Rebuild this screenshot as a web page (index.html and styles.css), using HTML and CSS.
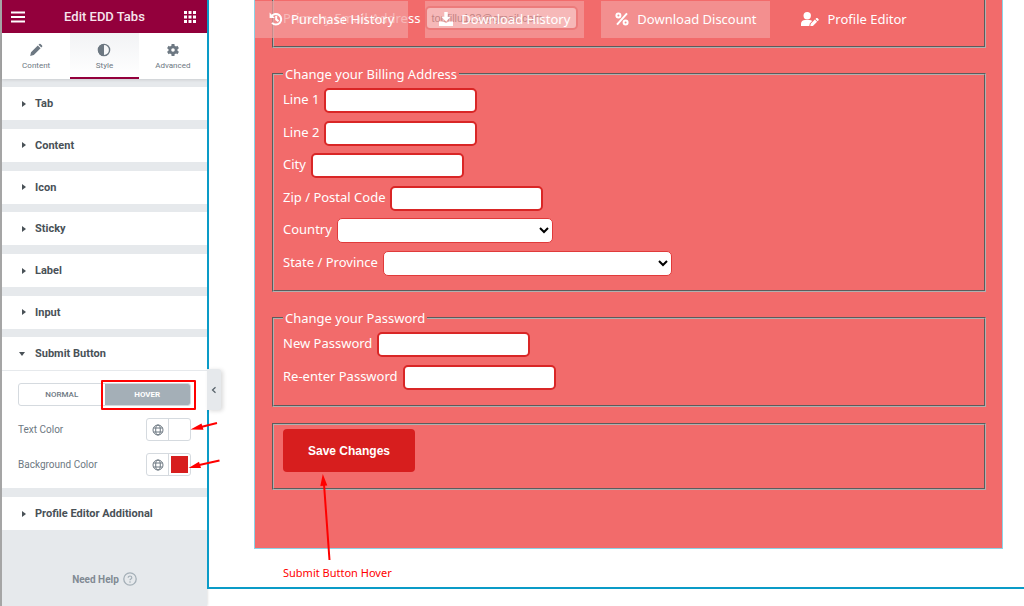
FILE: index.html
```
<!DOCTYPE html>
<html lang="en">
<head>
<meta charset="utf-8">
<meta name="viewport" content="width=device-width, initial-scale=1">
<title>Edit EDD Tabs</title>
<link rel="stylesheet" href="styles.css">
</head>
<body>
<div class="editor">
  <aside class="sidebar">
    <header class="topbar">
      <button class="icon-btn" aria-label="Menu"><svg width="14" height="12" viewBox="0 0 14 12"><path d="M0 1.5h14M0 6h14M0 10.5h14" stroke="#fff" stroke-width="2"/></svg></button>
      <h1 class="title">Edit EDD Tabs</h1>
      <button class="icon-btn" aria-label="Widgets"><svg width="12" height="12" viewBox="0 0 12 12"><path d="M0 1.5h12M0 6h12M0 10.5h12" stroke="#fff" stroke-width="2.8" stroke-dasharray="3 1.5"/></svg></button>
    </header>
    <nav class="modes">
      <button class="mode"><svg width="14" height="14" viewBox="0 0 14 14" fill="#6d7882"><path d="M2 9.2 8.8 2.4l2.8 2.8-6.8 6.8-3.6.9zM9.5 1.7l.8-.8q.7-.5 1.3 0l1.5 1.5q.5.7 0 1.3l-.8.8z"/></svg>Content</button>
      <button class="mode mode-on"><svg width="14" height="14" viewBox="0 0 14 14"><circle cx="7" cy="7" r="5.6" fill="none" stroke="#6d7882" stroke-width="1.4"/><path d="M7 1a6 6 0 0 0 0 12z" fill="#6d7882"/></svg>Style</button>
      <button class="mode"><svg width="14" height="14" viewBox="0 0 14 14"><circle cx="7" cy="7" r="3.2" fill="none" stroke="#6d7882" stroke-width="2.8"/><path d="M7 1v2M7 11v2M1.8 4l1.7 1M10.5 9l1.7 1M1.8 10l1.7-1M10.5 5l1.7-1" stroke="#6d7882" stroke-width="3"/></svg>Advanced</button>
    </nav>
    <div class="sections">
      <button class="section">Tab</button>
      <button class="section">Content</button>
      <button class="section">Icon</button>
      <button class="section">Sticky</button>
      <button class="section">Label</button>
      <button class="section">Input</button>
    </div>
    <section class="open">
      <button class="section section-open">Submit Button</button>
      <div class="controls">
        <div class="switch">
          <button class="state">NORMAL</button>
          <button class="state state-on">HOVER</button>
        </div>
        <div class="control"><span>Text Color</span>
          <span class="picker"><button class="pick" aria-label="Global text color"><svg class="globe" viewBox="0 0 12 12"><circle cx="6" cy="6" r="5"/><ellipse cx="6" cy="6" rx="2.3" ry="5"/><path d="M1.6 4h8.8M1.6 8h8.8"/></svg></button><button class="pick" aria-label="Text color"><i class="swatch"></i></button></span>
        </div>
        <div class="control"><span>Background Color</span>
          <span class="picker"><button class="pick" aria-label="Global background color"><svg class="globe" viewBox="0 0 12 12"><circle cx="6" cy="6" r="5"/><ellipse cx="6" cy="6" rx="2.3" ry="5"/><path d="M1.6 4h8.8M1.6 8h8.8"/></svg></button><button class="pick" aria-label="Background color"><i class="swatch swatch-red"></i></button></span>
        </div>
      </div>
    </section>
    <button class="section last">Profile Editor Additional</button>
    <a class="help" href="#">Need Help <svg width="14" height="14" viewBox="0 0 14 14"><circle cx="7" cy="7" r="6.2" fill="none" stroke="#a4afb7" stroke-width="1.3"/><path d="M5.2 5.7c0-2.3 3.6-2.2 3.6 0 0 1.3-1.7 1.3-1.8 2.5M7 9.3v1.4" fill="none" stroke="#a4afb7" stroke-width="1.2"/></svg></a>
  </aside>

  <main class="preview">
    <div class="frame">
      <div class="widget">
        <nav class="tabs">
          <a class="tab" href="#"><svg width="14" height="14" viewBox="0 0 14 14" fill="none" stroke="#fff" stroke-width="2"><path d="M2.5 4.3A5.3 5.3 0 1 1 3 10.9M7.2 3.8v3.6l2.3 1.8"/><path d="M.6.6v5.3h5.2z" fill="#fff" stroke="none"/></svg>Purchase History</a>
          <a class="tab" href="#"><svg width="14" height="14" viewBox="0 0 14 14" fill="#fff"><path d="M5.3 0h3.4v4.8h3L7 9.5 2.3 4.8h3z"/><path d="M0 9.4h4.3L7 11.2l2.7-1.8H14V14H0z"/></svg>Download History</a>
          <a class="tab" href="#"><svg width="14" height="14" viewBox="0 0 14 14" fill="none" stroke="#fff" stroke-width="2"><circle cx="3.4" cy="3.6" r="2"/><circle cx="10.6" cy="10.4" r="2"/><path d="M12 1.4 2 12.6"/></svg>Download Discount</a>
          <a class="tab tab-on" href="#"><svg width="18" height="14" viewBox="0 0 18 14" fill="#fff"><circle cx="6.2" cy="3.7" r="3.7"/><path d="M0 14v-2.3C0 9.5 1.8 8 4 8h4.4q1.7 0 2.8 1.1L8.8 11.5 8.3 14zM9.3 14l.4-2.2 4.2-4.2 2.2 2.2L11.9 14zM14.5 7l.9-.9q.5-.4 1 0l1.2 1.2q.4.5 0 1l-.9.9z"/></svg>Profile Editor</a>
        </nav>
        <form class="form">
          <fieldset class="group group-email">
            <div class="row"><label for="email">Primary Email Address</label><input class="field field-email" id="email" type="email" value="toufillu123@gmail.com"></div>
          </fieldset>
          <fieldset class="group group-address">
            <legend>Change your Billing Address</legend>
            <div class="rows">
              <div class="row"><label for="l1">Line 1</label><input class="field" id="l1"></div>
              <div class="row"><label for="l2">Line 2</label><input class="field" id="l2"></div>
              <div class="row"><label for="city">City</label><input class="field" id="city"></div>
              <div class="row"><label for="zip">Zip / Postal Code</label><input class="field" id="zip"></div>
              <div class="row"><label for="country">Country</label><select class="field select" id="country"><option></option></select></div>
              <div class="row"><label for="state">State / Province</label><select class="field select select-wide" id="state"><option></option></select></div>
            </div>
          </fieldset>
          <fieldset class="group group-password">
            <legend>Change your Password</legend>
            <div class="row"><label for="p1">New Password</label><input class="field" id="p1" type="password"></div>
            <div class="row"><label for="p2">Re-enter Password</label><input class="field" id="p2" type="password"></div>
          </fieldset>
          <fieldset class="group group-submit">
            <button class="save" type="button">Save Changes</button>
          </fieldset>
        </form>
      </div>
      <p class="caption">Submit Button Hover</p>
    </div>
  </main>
  <button class="collapse" aria-label="Collapse panel"><svg width="6" height="8" viewBox="0 0 6 8"><path d="M4.5 1.2 1.5 4l3 2.8" fill="none" stroke="#556068" stroke-width="1.2"/></svg></button>
  <div class="highlight"></div>
  <svg class="arrows" width="340" height="580" viewBox="0 0 340 580" fill="red" stroke="red"><path d="M217 423 200 427.300M219.500 460.500 197 465.500M329.500 560 324 484" stroke-width="2"/><path d="M190.500 429.500 201.500 423.500 203.500 429.800zM188.500 468 199 461.800 201 468zM322.800 474 327.300 485.500 320.300 486z" stroke="none"/></svg>
</div>
</body>
</html>
```
FILE: styles.css
```
* { box-sizing: border-box; }
body { margin: 0; font-family: Roboto, sans-serif; background: #fff; }
button { font: inherit; border: 0; padding: 0; background: none; cursor: pointer; }
.editor { position: relative; display: flex; min-height: 100vh; overflow: hidden; }

.sidebar { flex: none; width: 207px; border-left: 2px solid #a5a5a5; background: #e6e9ec; display: flex; flex-direction: column; box-shadow: 0 0 3px rgba(0,0,0,.2); }
.topbar { height: 33px; padding: 0 11px 0 9px; background: #93003c; display: flex; align-items: center; justify-content: space-between; }
.icon-btn { display: flex; }
.title { margin: 0; font-size: 13px; font-weight: 500; color: #f6e4ec; }
.modes { display: flex; height: 46px; background: #fff; box-shadow: 0 1px 3px rgba(0,0,0,.12); }
.mode { flex: 1; display: flex; flex-direction: column; align-items: center; gap: 4px; padding-top: 10px; font-size: 8px; line-height: 10px; color: #6d7882; border-bottom: 2px solid transparent; }
.mode-on { background: linear-gradient(#f2f3f5, #fff); border-bottom-color: #93003c; }
.sections { height: 242px; margin-top: 8px; display: flex; flex-direction: column; justify-content: space-between; }
.section { display: flex; align-items: center; gap: 8px; width: 100%; height: 33px; padding-left: 20px; background: #fff; font-size: 11px; font-weight: 700; color: #495157; }
.section::before { content: ""; border: solid transparent; border-width: 3px 0 3px 4px; border-left-color: #495157; margin-right: 1px; }
.section-open { height: 34px; padding-left: 17px; border-bottom: 1px solid #e6e9ec; }
.section-open::before { border-width: 4px 3px 0; border-color: #495157 transparent transparent; margin-right: 2px; }
.open { margin-top: 8px; background: #fff; }
.controls { display: grid; gap: 12px; padding: 12px 16px 12px; }
.switch { display: flex; height: 23px; border: 1px solid #d5dadf; border-radius: 3px; overflow: hidden; }
.state { flex: 1; font-size: 8px; font-weight: 500; color: #6d7882; }
.state-on { background: #a4afb7; color: #fff; font-weight: 700; }
.control { display: flex; align-items: center; justify-content: space-between; font-size: 10px; color: #6d7882; }
.picker { display: flex; height: 23px; width: 45px; border: 1px solid #d5dadf; border-radius: 3px; }
.pick { flex: 1; display: flex; align-items: center; justify-content: center; }
.pick + .pick { border-left: 1px solid #d5dadf; }
.globe { width: 12px; height: 12px; fill: none; stroke: #6d7882; stroke-width: 1; }
.swatch { width: 17px; height: 17px; background: #fff; }
.swatch-red { background: #d71e1e; }
.last { margin-top: 9px; }
.help { display: flex; align-items: center; justify-content: center; gap: 4px; margin: 42px 0 0; font-size: 10px; font-weight: 700; color: #818a93; text-decoration: none; }

.preview { flex: 1; min-width: 0; padding-bottom: 17px; font-family: "Noto Sans", sans-serif; display: flex; }
.frame { flex: 1; min-width: 0; padding: 0 21px 0 45px; border: solid #0a9bc7; border-width: 0 0 2px 2px; }
.widget { position: relative; background: #f26b6b; border: 1px solid #8bd4e8; border-top: 0; color: #fff; font-size: 13px; line-height: 20px; padding-bottom: 58px; }
.tabs { position: absolute; top: 1px; left: 0; display: flex; gap: 17px; }
.tab { display: flex; align-items: center; gap: 8px; height: 37px; padding: 0 14px 2px; background: rgba(242,157,157,.72); color: #fff; text-decoration: none; }
.tab-on { background: #f26b6b; }
.form { padding: 0 16px 0 17px; }
.group { margin: 0; padding: 0 9px; min-width: 0; border: 2px groove #b0b0b0; }
.group-email { border-top: 0; padding-top: 6px; padding-bottom: 16px; }
.group-address { margin-top: 16px; padding-top: 4px; padding-bottom: 14px; }
.group-password { margin-top: 16px; padding-top: 1px; padding-bottom: 15px; }
.group-submit { margin-top: 16px; padding: 4px 9px 16px; }
legend { padding: 0 2px; line-height: 20px; }
.rows { height: 188px; display: flex; flex-direction: column; justify-content: space-between; }
.row { display: flex; align-items: center; gap: 5px; }
.rows label, .group-password label { padding-bottom: 3px; }
.group-password .row { padding-top: 3px; }
.group-password .row + .row { padding-top: 8px; }
.field { width: 153px; height: 25px; margin: 0; padding: 0 5px; border: 2px solid #d92626; border-radius: 5px; background: #fff; font-size: 13px; }
.field-email { height: 24px; padding: 0 4px; font: 11px "Liberation Sans", sans-serif; color: #444; }
.select { width: 216px; padding: 0; border: 1px solid #e03a3a; }
.select-wide { width: 289px; }
.save { display: block; height: 43px; padding: 0 25px; border-radius: 4px; background: #d71e1e; color: #fff; font: bold 12px "Liberation Sans", sans-serif; }
.caption { margin: 16px 0 6px 29px; color: red; font: 11px/16px "Noto Sans", sans-serif; }

.collapse { position: absolute; left: 207px; top: 369px; width: 14px; height: 41px; background: #e6e9ec; border-radius: 0 3px 3px 0; box-shadow: 2px 1px 4px rgba(0,0,0,.15); display: flex; align-items: center; justify-content: center; }
.highlight { position: absolute; left: 101px; top: 380px; width: 95px; height: 30px; border: 2px solid red; border-radius: 1px; pointer-events: none; }
.arrows { position: absolute; left: 0; top: 0; pointer-events: none; }
```
